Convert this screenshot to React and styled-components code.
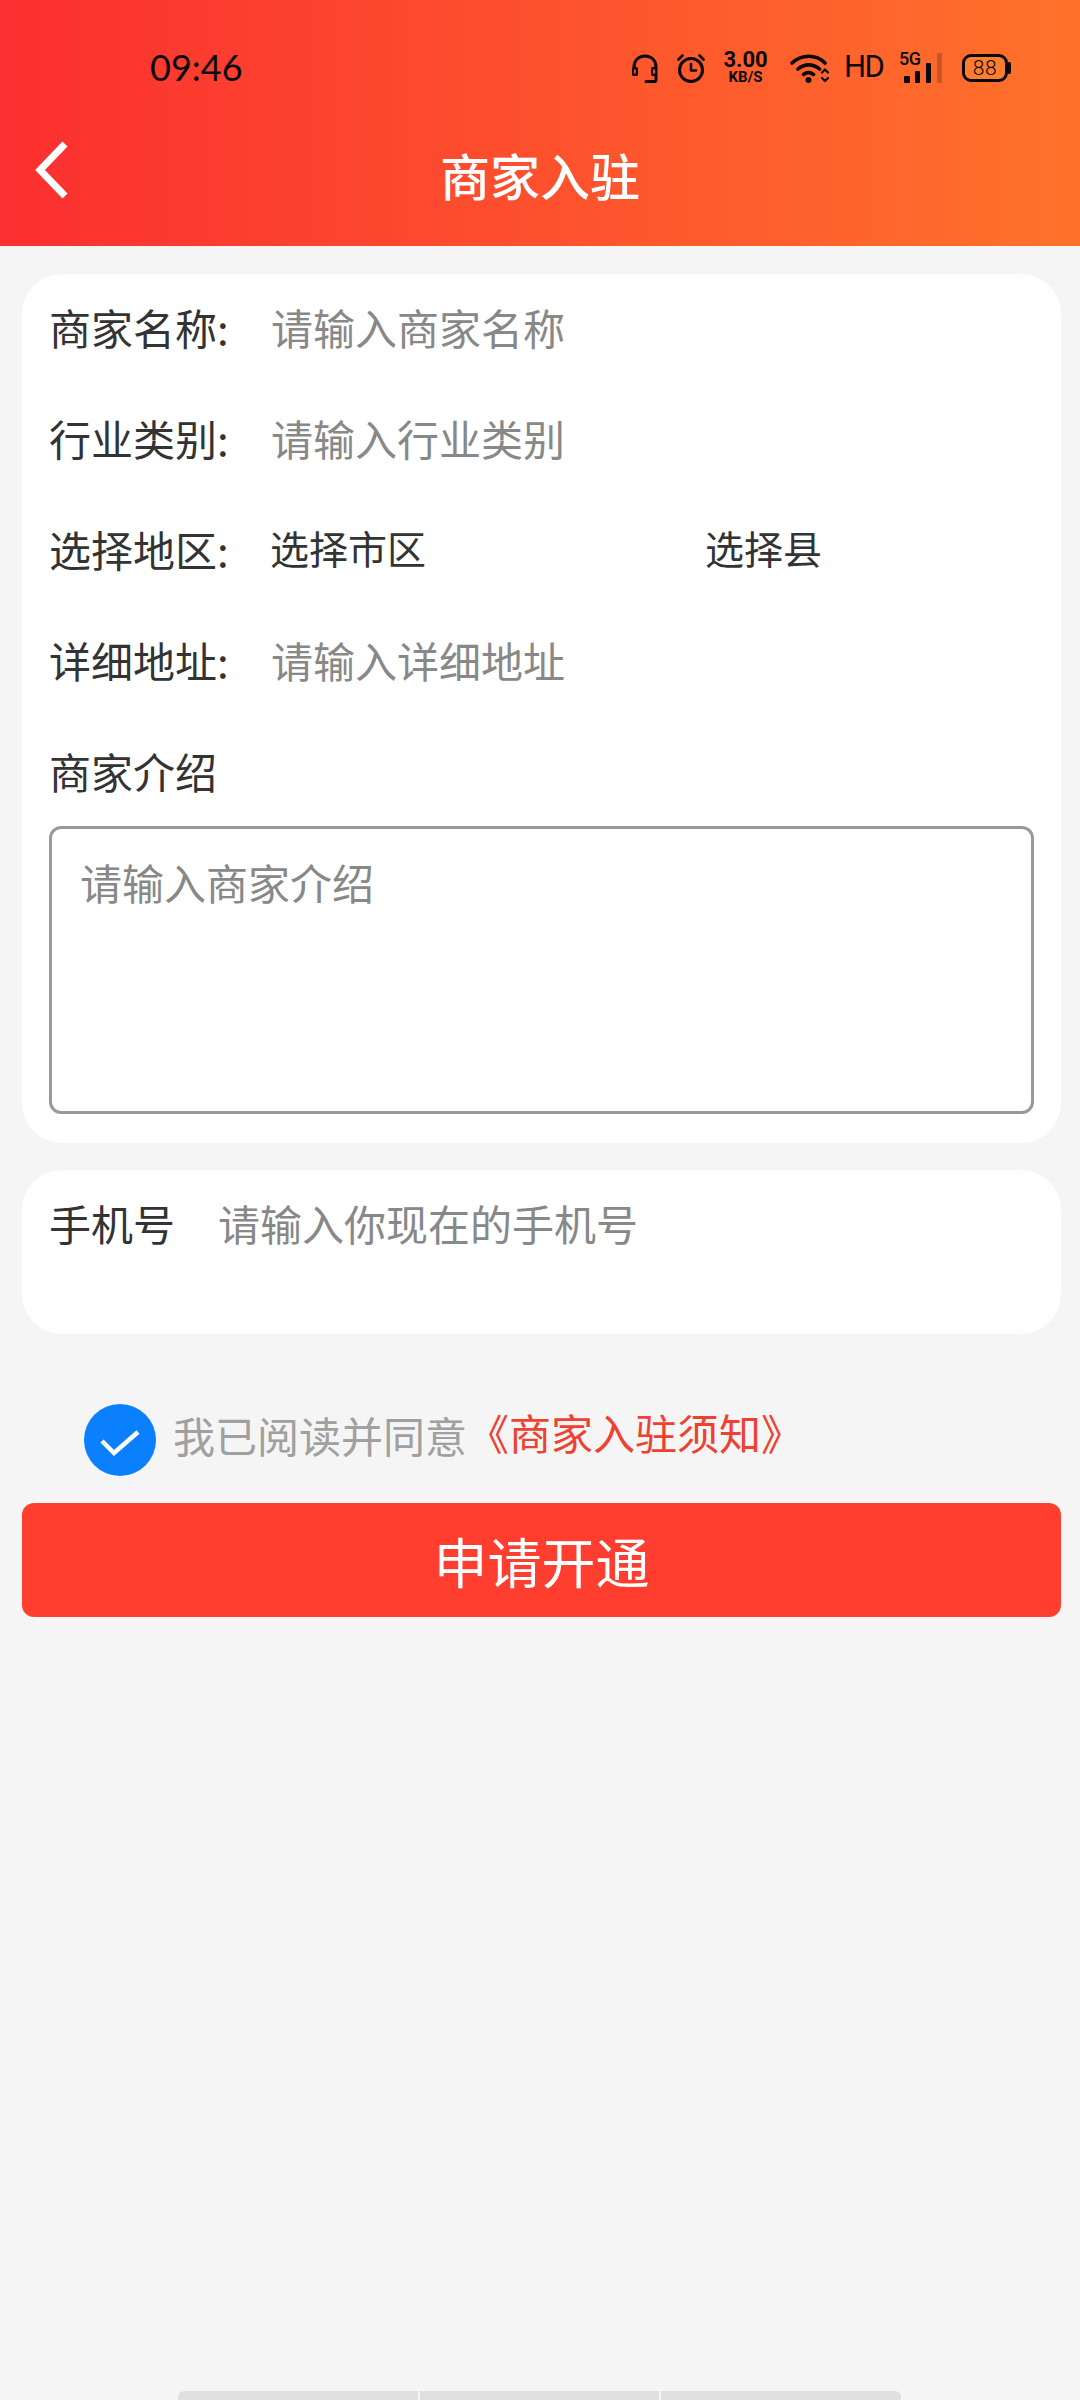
import React from "react";
import styled, { createGlobalStyle } from "styled-components";

const CJK = `"Noto Sans CJK SC", "Noto Sans", sans-serif`;

const Global = createGlobalStyle`
  html, body { margin: 0; padding: 0; background: #f5f5f5; }
  * { box-sizing: border-box; }
`;

const Page = styled.div`
  width: 1080px;
  height: 2400px;
  background: #f5f5f5;
  display: flex;
  flex-direction: column;
  font-family: ${CJK};
  overflow: hidden;
`;

const Header = styled.header`
  height: 246px;
  background: linear-gradient(90deg, #fb2f30 0%, #ff722b 100%);
  display: flex;
  flex-direction: column;
`;

const StatusBar = styled.div`
  margin-top: 30px;
  height: 76px;
  display: flex;
  align-items: center;
  padding: 0 69px 0 150px;
  color: #0a0a0a;
`;

const Time = styled.span`
  font-family: Lato, "Open Sans", sans-serif;
  font-size: 36px;
  font-weight: 400;
  margin: -3px auto 0 0;
`;

const StatusIcon = styled.svg`
  display: block;
  flex: none;
  margin-left: ${(p) => p.$ml || 0}px;
`;

const Speed = styled.div`
  margin: -2px 0 0 17px;
  width: 47px;
  display: flex;
  flex-direction: column;
  align-items: center;
  font-family: Roboto, sans-serif;
  font-weight: 700;
`;

const SpeedValue = styled.span`
  font-size: 22px;
  line-height: 20px;
`;

const SpeedUnit = styled.span`
  font-size: 15px;
  line-height: 15px;
`;

const Hd = styled.span`
  margin: -2px 0 0 14px;
  font-family: Roboto, sans-serif;
  font-weight: 400;
  font-size: 31px;
  line-height: 36px;
  width: 35px;
  letter-spacing: -1.500px;
`;

const Signal = styled.div`
  margin-left: 20px;
  width: 43px;
  height: 30px;
  position: relative;
`;

const FiveG = styled.span`
  position: absolute;
  left: 0;
  top: -3px;
  font-family: Roboto, sans-serif;
  font-weight: 500;
  font-size: 18px;
  line-height: 18px;
  letter-spacing: -0.5px;
`;

const Battery = styled.div`
  margin-left: 20px;
  width: 49px;
  height: 28px;
  display: flex;
  align-items: center;
`;

const BatteryBody = styled.div`
  width: 46px;
  height: 28px;
  border: 3px solid #0a0a0a;
  border-radius: 9px;
  background: #ff7d2e;
  display: flex;
  align-items: center;
  justify-content: center;
  font-family: Roboto, sans-serif;
  font-weight: 300;
  font-size: 21px;
  letter-spacing: 0.5px;
`;

const BatteryCap = styled.div`
  width: 3px;
  height: 12px;
  background: #0a0a0a;
  border-radius: 0 2px 2px 0;
`;

const NavBar = styled.div`
  flex: 1;
  display: grid;
  grid-template-columns: 1fr auto 1fr;
  align-items: center;
`;

const BackIcon = styled.svg`
  display: block;
  margin: -12px 0 0 34px;
`;

const Title = styled.h1`
  margin: -4px 0 0;
  color: #fff;
  font-size: 50px;
  font-weight: 500;
  line-height: 70px;
`;

const Card = styled.section`
  margin: ${(p) => p.$top}px 19px 0 22px;
  background: #fff;
  border-radius: 40px;
  padding: 0 27px 0 27px;
  height: ${(p) => p.$height}px;
`;

const Row = styled.div`
  height: 111px;
  padding-bottom: 6px;
  display: flex;
  align-items: center;
`;

const Label = styled.span`
  width: ${(p) => p.$width}px;
  flex: none;
  font-size: 42px;
  color: #333;
`;

const Placeholder = styled.span`
  font-size: 42px;
  color: #888;
`;

const Select = styled.span`
  width: ${(p) => p.$width}px;
  flex: none;
  font-size: 39px;
  color: #333;
  margin-top: -4px;
`;

const TextArea = styled.div`
  margin: -3px 0 0 0;
  height: 288px;
  border: 3px solid #999;
  border-radius: 12px;
  padding: 19px 28px;
  line-height: 68px;
`;

const Agreement = styled.div`
  margin: 70px 0 0 84px;
  height: 72px;
  display: flex;
  align-items: center;
`;

const CheckCircle = styled.svg`
  display: block;
  margin-right: 17px;
`;

const AgreeText = styled.span`
  font-size: 42px;
  color: #a0a0a0;
  margin-top: -12px;
`;

const AgreeLink = styled.span`
  font-size: 42px;
  color: #f0402f;
  margin-top: -18px;
`;

const SubmitButton = styled.button`
  margin: 27px 19px 0 22px;
  height: 114px;
  border: none;
  border-radius: 12px;
  background: #ff3e2f;
  color: #fff;
  font-family: ${CJK};
  font-size: 54px;
  font-weight: 400;
`;

const HomeBar = styled.div`
  margin: auto 0 0 178px;
  width: 723px;
  height: 9px;
  display: flex;
  gap: 2px;
`;

const HomeSegment = styled.div`
  flex: 1;
  background: #e0e0e0;
  &:first-child { border-top-left-radius: 6px; }
  &:last-child { border-top-right-radius: 6px; }
`;

const Ink = { fill: "none", stroke: "#0a0a0a", strokeLinecap: "round", strokeLinejoin: "round" };

export default function App() {
  return (
    <>
      <Global />
      <Page>
        <Header>
          <StatusBar>
            <Time>09:46</Time>
            <StatusIcon width="28" height="29" viewBox="0 0 28 29">
              <path {...Ink} strokeWidth="3" d="M3 16V13C3 6.500 7.500 2 14 2s11 4.500 11 11v13c0 1-.5 1.500-1.500 1.500H15" />
              <rect x="1" y="13" width="6" height="9" rx="1.500" fill="#0a0a0a" />
              <rect x="20" y="13" width="6" height="9" rx="1.500" fill="#0a0a0a" />
              <rect x="2.800" y="15.500" width="2" height="4" fill="#fb4a2c" />
              <rect x="22" y="15.500" width="2" height="4" fill="#fb4a2c" />
            </StatusIcon>
            <StatusIcon $ml={18} width="28" height="29" viewBox="0 0 28 29">
              <circle {...Ink} strokeWidth="3" cx="14" cy="16" r="11.500" />
              <path {...Ink} strokeWidth="2.600" d="M14 10v6.500h5M1.500 5.500 5.500 1.500M26.500 5.500 22.500 1.500" />
            </StatusIcon>
            <Speed>
              <SpeedValue>3.00</SpeedValue>
              <SpeedUnit>KB/S</SpeedUnit>
            </Speed>
            <StatusIcon $ml={21} width="40" height="30" viewBox="0 0 40 30">
              <path {...Ink} strokeWidth="3.600" d="M2 10C12 1 26 1 35 10M8 16c6.500-5.500 15-5.500 21.500 0M13.500 21.500c3-2.300 7-2.300 10 0" />
              <circle cx="18.500" cy="27" r="3" fill="#0a0a0a" />
              <path {...Ink} strokeWidth="2.200" d="M32 19.500l3-3 3 3M32 25l3 3 3-3" />
            </StatusIcon>
            <Hd>HD</Hd>
            <Signal>
              <FiveG>5G</FiveG>
              <StatusIcon width="43" height="30" viewBox="0 0 43 30">
                <rect x="5" y="23" width="6" height="7" rx="1" fill="#0a0a0a" />
                <rect x="16" y="18" width="5" height="12" rx="1" fill="#0a0a0a" />
                <rect x="27" y="10" width="5" height="20" rx="1" fill="#0a0a0a" />
                <rect x="38" y="0" width="5" height="30" rx="1" fill="#0a0a0a" fillOpacity="0.22" />
              </StatusIcon>
            </Signal>
            <Battery>
              <BatteryBody>88</BatteryBody>
              <BatteryCap />
            </Battery>
          </StatusBar>
          <NavBar>
            <BackIcon width="36" height="58" viewBox="0 0 36 58">
              <path d="M31 3 6 29l25 26" fill="none" stroke="#fff" strokeWidth="7" />
            </BackIcon>
            <Title>商家入驻</Title>
          </NavBar>
        </Header>

        <Card $top={28} $height={869}>
          <Row>
            <Label $width={222}>商家名称:</Label>
            <Placeholder>请输入商家名称</Placeholder>
          </Row>
          <Row>
            <Label $width={222}>行业类别:</Label>
            <Placeholder>请输入行业类别</Placeholder>
          </Row>
          <Row>
            <Label $width={221}>选择地区:</Label>
            <Select $width={435}>选择市区</Select>
            <Select>选择县</Select>
          </Row>
          <Row>
            <Label $width={222}>详细地址:</Label>
            <Placeholder>请输入详细地址</Placeholder>
          </Row>
          <Row>
            <Label>商家介绍</Label>
          </Row>
          <TextArea>
            <Placeholder>请输入商家介绍</Placeholder>
          </TextArea>
        </Card>

        <Card $top={27} $height={164}>
          <Row>
            <Label $width={169}>手机号</Label>
            <Placeholder>请输入你现在的手机号</Placeholder>
          </Row>
        </Card>

        <Agreement>
          <CheckCircle width="72" height="72" viewBox="0 0 72 72">
            <circle cx="36" cy="36" r="36" fill="#0a80ff" />
            <path d="M18 37l12 12 24-21" fill="none" stroke="#fff" strokeWidth="4.500" />
          </CheckCircle>
          <AgreeText>我已阅读并同意</AgreeText>
          <AgreeLink>《商家入驻须知》</AgreeLink>
        </Agreement>

        <SubmitButton>申请开通</SubmitButton>

        <HomeBar>
          <HomeSegment />
          <HomeSegment />
          <HomeSegment />
        </HomeBar>
      </Page>
    </>
  );
}
